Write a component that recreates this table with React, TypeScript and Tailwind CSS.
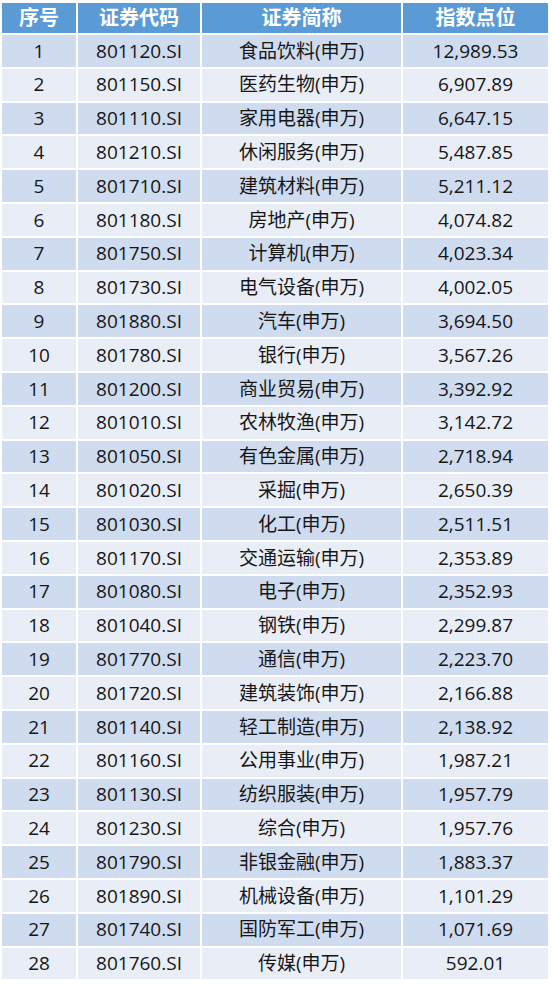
import React from "react";

const rows: [string, string, string][] = [
  ["801120.SI", "食品饮料(申万)", "12,989.53"],
  ["801150.SI", "医药生物(申万)", "6,907.89"],
  ["801110.SI", "家用电器(申万)", "6,647.15"],
  ["801210.SI", "休闲服务(申万)", "5,487.85"],
  ["801710.SI", "建筑材料(申万)", "5,211.12"],
  ["801180.SI", "房地产(申万)", "4,074.82"],
  ["801750.SI", "计算机(申万)", "4,023.34"],
  ["801730.SI", "电气设备(申万)", "4,002.05"],
  ["801880.SI", "汽车(申万)", "3,694.50"],
  ["801780.SI", "银行(申万)", "3,567.26"],
  ["801200.SI", "商业贸易(申万)", "3,392.92"],
  ["801010.SI", "农林牧渔(申万)", "3,142.72"],
  ["801050.SI", "有色金属(申万)", "2,718.94"],
  ["801020.SI", "采掘(申万)", "2,650.39"],
  ["801030.SI", "化工(申万)", "2,511.51"],
  ["801170.SI", "交通运输(申万)", "2,353.89"],
  ["801080.SI", "电子(申万)", "2,352.93"],
  ["801040.SI", "钢铁(申万)", "2,299.87"],
  ["801770.SI", "通信(申万)", "2,223.70"],
  ["801720.SI", "建筑装饰(申万)", "2,166.88"],
  ["801140.SI", "轻工制造(申万)", "2,138.92"],
  ["801160.SI", "公用事业(申万)", "1,987.21"],
  ["801130.SI", "纺织服装(申万)", "1,957.79"],
  ["801230.SI", "综合(申万)", "1,957.76"],
  ["801790.SI", "非银金融(申万)", "1,883.37"],
  ["801890.SI", "机械设备(申万)", "1,101.29"],
  ["801740.SI", "国防军工(申万)", "1,071.69"],
  ["801760.SI", "传媒(申万)", "592.01"],
];

const font = { fontFamily: '"Open Sans", "Noto Sans CJK SC", sans-serif' };

export default function App() {
  return (
    <div className="w-[553px] h-[985px] bg-white pt-[3px] pl-[2px]" style={font}>
      <div className="grid grid-cols-[74px_122px_199px_145px] gap-x-[2px] gap-y-[2px] text-[#161616]">
        {["序号", "证券代码", "证券简称", "指数点位"].map((h) => (
          <div
            key={h}
            className="h-[30px] bg-[#5b9bd5] text-white font-bold text-[20px] flex items-center justify-center"
          >
            {h}
          </div>
        ))}
        {rows.map((r, i) => {
          const bg = i % 2 === 0 ? "bg-[#cfdbee]" : "bg-[#e9eef6]";
          return (
            <React.Fragment key={i}>
              <div className={`h-[31.8px] ${bg} flex items-center justify-center text-[19px]`}>{i + 1}</div>
              <div className={`h-[31.8px] ${bg} flex items-center justify-center text-[19px]`}>{r[0]}</div>
              <div className={`h-[31.8px] ${bg} flex items-center justify-center text-[19px]`}>{r[1]}</div>
              <div className={`h-[31.8px] ${bg} flex items-center justify-center text-[19px]`}>{r[2]}</div>
            </React.Fragment>
          );
        })}
      </div>
    </div>
  );
}
